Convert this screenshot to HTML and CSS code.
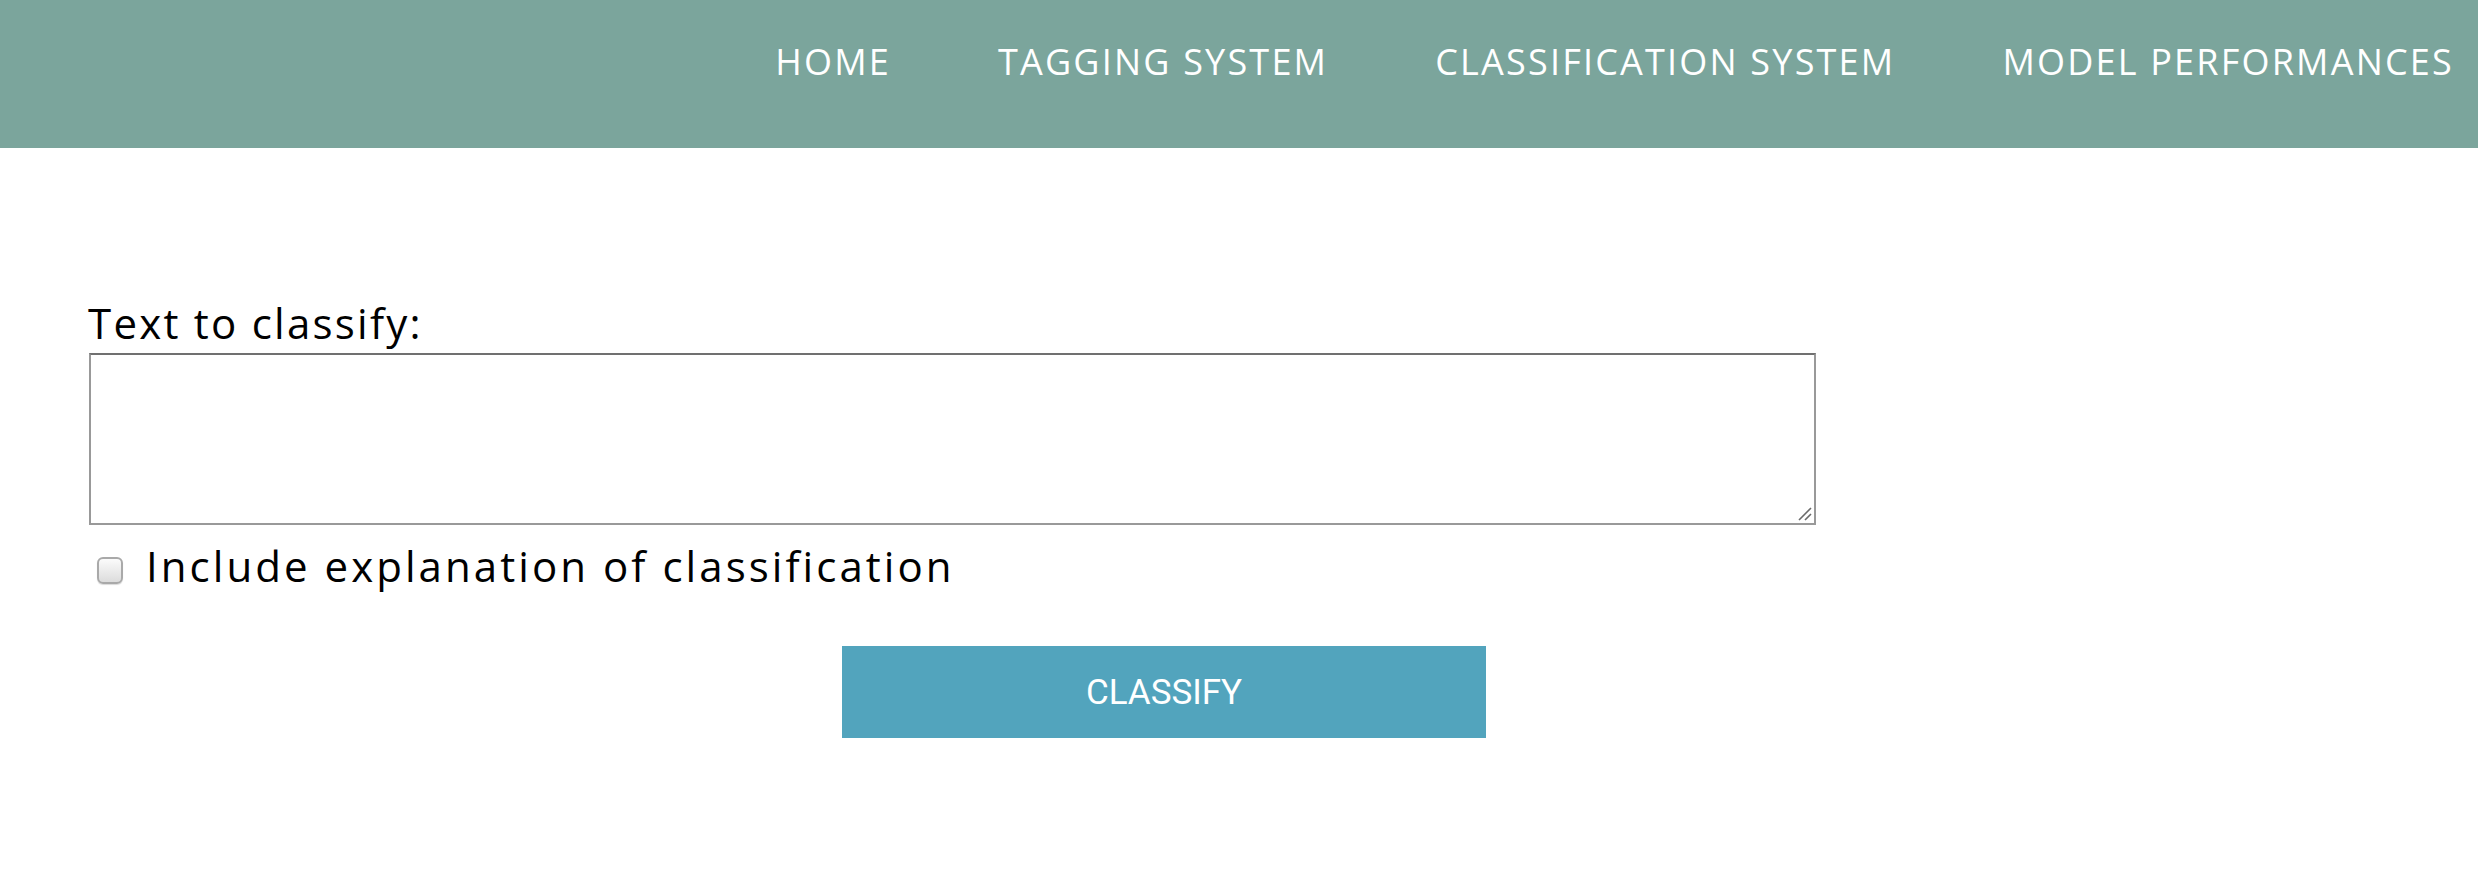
FILE: index.html
```html
<!DOCTYPE html>
<html lang="en">
<head>
<meta charset="utf-8">
<title>Classification System</title>
<link rel="stylesheet" href="styles.css">
</head>
<body>
<header class="topbar">
  <nav class="nav">
    <a class="nav-link" href="#">HOME</a>
    <a class="nav-link" href="#">TAGGING SYSTEM</a>
    <a class="nav-link" href="#">CLASSIFICATION SYSTEM</a>
    <a class="nav-link" href="#">MODEL PERFORMANCES</a>
  </nav>
</header>
<main class="page">
  <form class="classify-form">
    <label class="field-label" for="text">Text to classify:</label>
    <div class="textarea-wrap">
      <textarea id="text" class="text-input"></textarea>
      <svg class="grip" width="14" height="14" viewBox="0 0 14 14"><path d="M13 1 L1 13 M13 7 L7 13" stroke="#6a6a6a" stroke-width="1.6" fill="none"/></svg>
    </div>
    <div class="check-row">
      <span class="checkbox"></span>
      <span class="check-label">Include explanation of classification</span>
    </div>
    <button type="button" class="btn">CLASSIFY</button>
  </form>
</main>
</body>
</html>
```
FILE: styles.css
```css
* { box-sizing: border-box; }
html, body { margin: 0; padding: 0; background: #fff; }
body { font-family: "Open Sans", "DejaVu Sans", sans-serif; color: #000; }

.topbar {
  height: 148px;
  background: #7ba59c;
  padding-top: 44px;
  padding-right: 24px;
}
.nav {
  display: flex;
  justify-content: flex-end;
  gap: 107px;
}
.nav-link {
  color: #fff;
  text-decoration: none;
  font-size: 36px;
  line-height: 36px;
  letter-spacing: 2.2px;
  white-space: nowrap;
}

.page { padding: 148px 0 0 89px; }
.classify-form { width: 2150px; }

.field-label {
  display: block;
  font-size: 42px;
  line-height: 54px;
  letter-spacing: 2.25px;
  margin-left: -1px;
}
.textarea-wrap {
  position: relative;
  width: 1727px;
  height: 172px;
  margin-top: 3px;
}
.text-input {
  display: block;
  width: 100%;
  height: 100%;
  border: 2px solid #999;
  border-top-color: #707070;
  resize: none;
  outline: none;
  background: #fff;
  margin: 0;
}
.grip {
  position: absolute;
  right: 4px;
  bottom: 4px;
}

.check-row {
  display: flex;
  align-items: flex-start;
  margin-top: 17px;
  height: 48px;
}
.checkbox {
  width: 26px;
  height: 27px;
  margin: 15px 0 0 8px;
  border: 2px solid #a9a9a9;
  border-radius: 6px;
  background: linear-gradient(#fbfbfb, #dcdcdc);
  box-shadow: 0 1px 1px rgba(0,0,0,0.15);
}
.check-label {
  font-size: 42px;
  line-height: 48px;
  margin-left: 23px;
  letter-spacing: 3.05px;
}

.btn {
  display: block;
  margin: 56px auto 0;
  width: 644px;
  height: 92px;
  border: none;
  background: #52a4bd;
  color: #fff;
  font-family: Roboto, "Liberation Sans", sans-serif;
  font-size: 35px;
  padding: 0;
}
```
